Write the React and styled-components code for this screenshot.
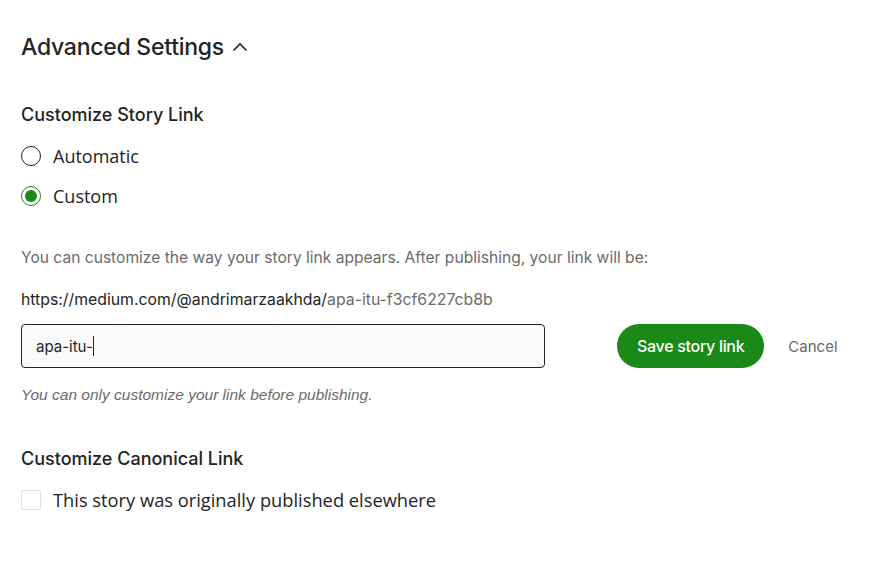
import React from "react";
import styled, { createGlobalStyle } from "styled-components";

const Global = createGlobalStyle`
  html, body { margin: 0; padding: 0; background: #fff; }
  body { font-family: Inter, "Noto Sans", sans-serif; color: #242424; }
`;

const Page = styled.div`
  padding: 33px 21px 0 21px;
  width: 850px;
`;

const Title = styled.h2`
  margin: 0;
  display: flex;
  align-items: center;
  gap: 8px;
  font-size: 23px;
  font-weight: 500;
  letter-spacing: -0.25px;
  line-height: 28px;
  color: #242424;
`;

const SectionTitle = styled.h3`
  margin: ${(p) => p.$top}px 0 0 0;
  font-size: 18px;
  font-weight: 500;
  line-height: 24px;
  color: #242424;
`;

const Options = styled.div`
  display: flex;
  flex-direction: column;
  gap: 16px;
  margin-top: 17px;
`;

const Option = styled.label`
  display: flex;
  align-items: center;
  gap: 12px;
  font-family: "Open Sans", "Noto Sans", sans-serif;
  font-size: ${(p) => p.$size || 18}px;
  line-height: 24px;
  color: #242424;
`;

const Radio = styled.span`
  box-sizing: border-box;
  width: 20px;
  height: 20px;
  border-radius: 50%;
  border: 1px solid ${(p) => (p.$checked ? "#1a8917" : "#242424")};
  display: flex;
  align-items: center;
  justify-content: center;
  &::after {
    content: "";
    width: 12px;
    height: 12px;
    border-radius: 50%;
    background: ${(p) => (p.$checked ? "#1a8917" : "transparent")};
  }
`;

const Box = styled.span`
  box-sizing: border-box;
  width: 20px;
  height: 20px;
  border: 1px solid #e2e2e2;
  border-radius: 2px;
`;

const Note = styled.p`
  margin: ${(p) => p.$top}px 0 0 0;
  font-size: ${(p) => p.$size}px;
  line-height: 22px;
  color: ${(p) => (p.$dark ? "#242424" : "#6b6b6b")};
`;

const Slug = styled.span`
  color: #6b6b6b;
`;

const Row = styled.div`
  display: flex;
  align-items: center;
  margin-top: 13px;
`;

const Input = styled.div`
  box-sizing: border-box;
  width: 524px;
  height: 44px;
  border: 1px solid #242424;
  border-radius: 4px;
  background: #fafafa;
  padding: 0 14px;
  display: flex;
  align-items: center;
  font-size: 15px;
  color: #242424;
`;

const Caret = styled.span`
  display: inline-block;
  width: 1px;
  height: 20px;
  background: #242424;
`;

const SaveButton = styled.button`
  margin-left: 72px;
  height: 44px;
  padding: 0 20px;
  border: none;
  border-radius: 22px;
  background: #1a8917;
  color: #fff;
  font-family: Inter, sans-serif;
  font-size: 16px;
  font-weight: 500;
  letter-spacing: -0.3px;
`;

const CancelButton = styled.button`
  margin-left: 24px;
  border: none;
  background: none;
  padding: 0;
  color: #6b6b6b;
  font-family: Inter, sans-serif;
  font-size: 15px;
`;

const Hint = styled.p`
  margin: 17px 0 0 0;
  font-family: "Liberation Sans", Arial, sans-serif;
  font-style: italic;
  font-size: 15.5px;
  line-height: 20px;
  color: #6b6b6b;
`;

const Chevron = () => (
  <svg width="16" height="10" viewBox="0 0 16 10" fill="none">
    <path d="M1.5 8.5L8 2l6.5 6.5" stroke="#242424" strokeWidth="1.6" />
  </svg>
);

export default function App() {
  return (
    <>
      <Global />
      <Page>
        <Title>
          Advanced Settings <Chevron />
        </Title>
        <SectionTitle $top={42}>Customize Story Link</SectionTitle>
        <Options>
          <Option>
            <Radio />
            Automatic
          </Option>
          <Option>
            <Radio $checked />
            Custom
          </Option>
        </Options>
        <Note $top={39} $size={15.6}>
          You can customize the way your story link appears. After publishing, your link will be:
        </Note>
        <Note $top={20} $size={15.8} $dark>
          https://medium.com/@andrimarzaakhda/<Slug>apa-itu-f3cf6227cb8b</Slug>
        </Note>
        <Row>
          <Input>
            apa-itu-
            <Caret />
          </Input>
          <SaveButton>Save story link</SaveButton>
          <CancelButton>Cancel</CancelButton>
        </Row>
        <Hint>You can only customize your link before publishing.</Hint>
        <SectionTitle $top={42}>Customize Canonical Link</SectionTitle>
        <Options>
          <Option $size={18.3}>
            <Box />
            This story was originally published elsewhere
          </Option>
        </Options>
      </Page>
    </>
  );
}
